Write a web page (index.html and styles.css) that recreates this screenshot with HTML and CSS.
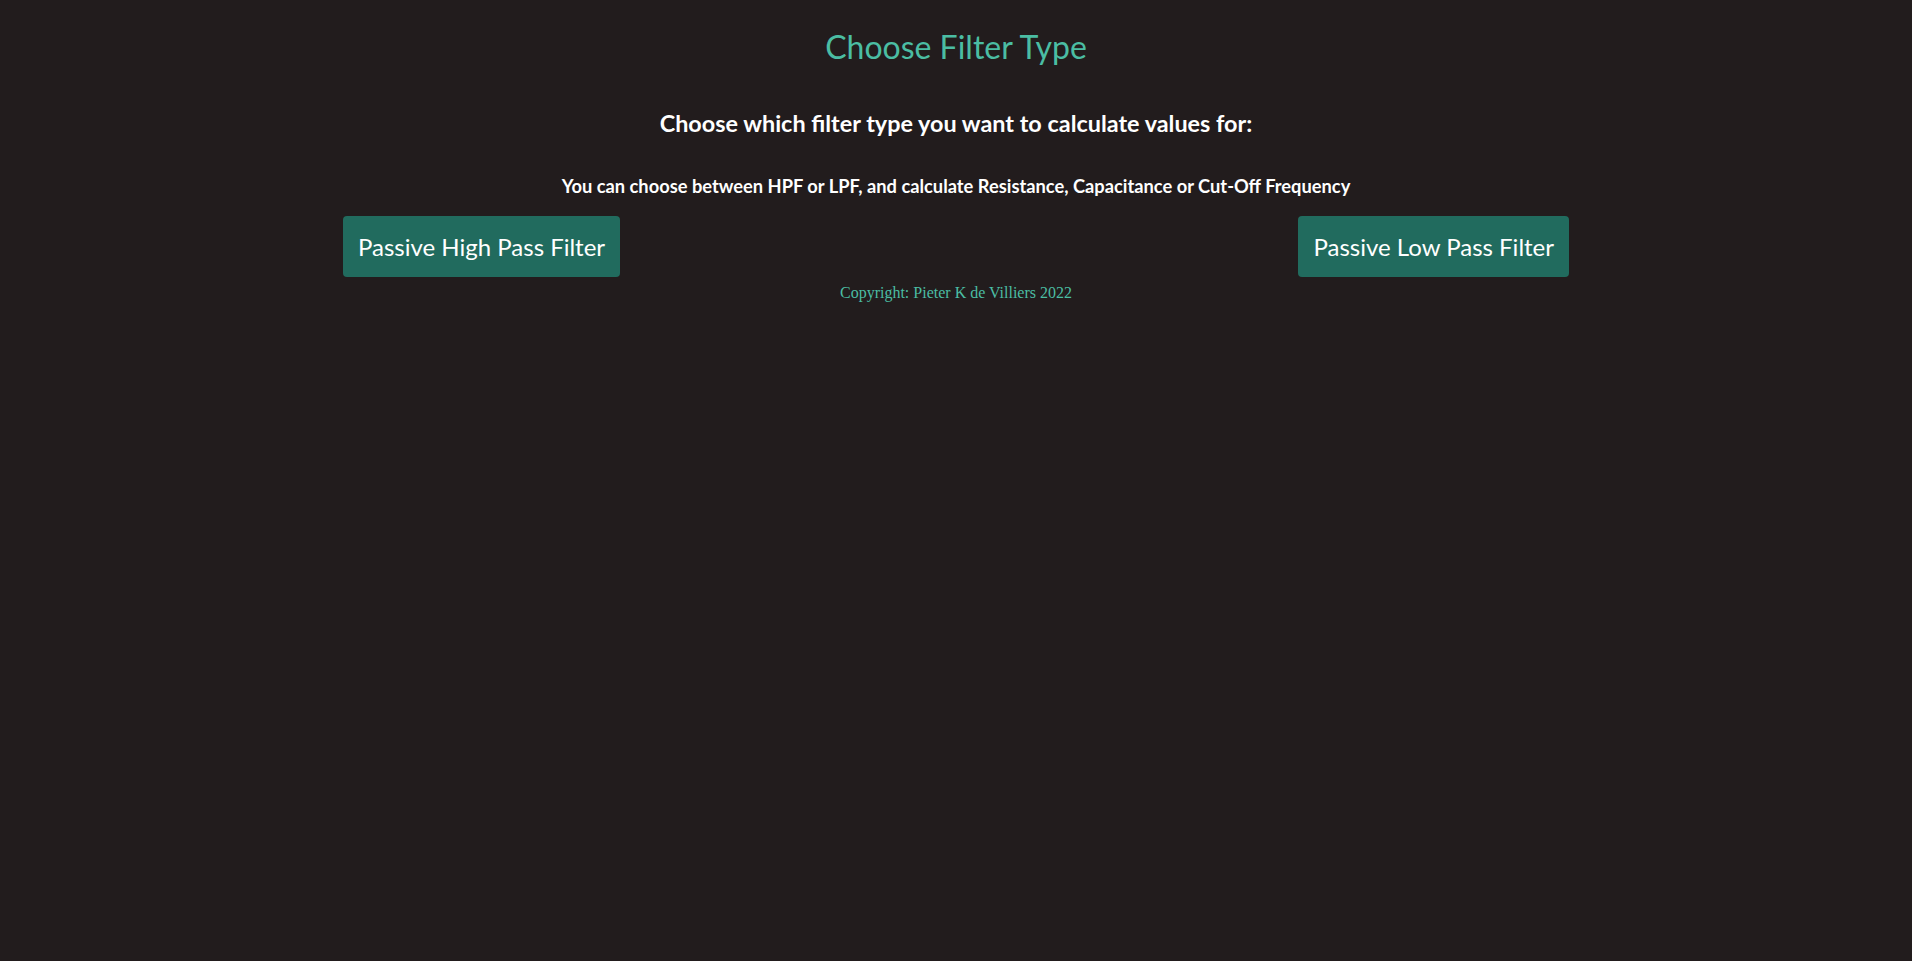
FILE: index.html
```html
<!DOCTYPE html>
<html lang="en">
<head>
<meta charset="utf-8">
<title>Choose Filter Type</title>
<link rel="stylesheet" href="styles.css">
</head>
<body>
<main class="page">
  <h1 class="title">Choose Filter Type</h1>
  <h2 class="subtitle">Choose which filter type you want to calculate values for:</h2>
  <h3 class="info">You can choose between HPF or LPF, and calculate Resistance, Capacitance or Cut-Off Frequency</h3>
  <div class="buttons">
    <button class="btn">Passive High Pass Filter</button>
    <button class="btn">Passive Low Pass Filter</button>
  </div>
  <footer class="copyright">Copyright: Pieter K de Villiers 2022</footer>
</main>
</body>
</html>
```
FILE: styles.css
```css
html, body {
  margin: 0;
  padding: 0;
  background: #221c1d;
  min-height: 100%;
}
body {
  height: 961px;
  font-family: Lato, "Open Sans", sans-serif;
  color: #ffffff;
}
.page {
  display: flex;
  flex-direction: column;
  align-items: center;
  padding-top: 21px;
}
.title {
  margin: 0;
  font-size: 32px;
  font-weight: 400;
  line-height: 52px;
  color: #4bbda3;
}
.subtitle {
  margin: 35px 0 0;
  font-size: 23.4px;
  font-weight: 700;
  line-height: 30px;
}
.info {
  margin: 37px 0 0;
  font-size: 18.3px;
  font-weight: 700;
  line-height: 22px;
}
.buttons {
  width: 1226px;
  display: flex;
  justify-content: space-between;
  margin-top: 19px;
}
.btn {
  font-family: Lato, "Open Sans", sans-serif;
  font-size: 24px;
  color: #ffffff;
  background: #216b5e;
  border: none;
  border-radius: 4px;
  height: 61px;
  padding: 0 15px;
  cursor: pointer;
}
.copyright {
  margin-top: 6px;
  font-family: "Liberation Serif", "Times New Roman", serif;
  font-size: 16px;
  line-height: 20px;
  color: #4bbda3;
}
```
